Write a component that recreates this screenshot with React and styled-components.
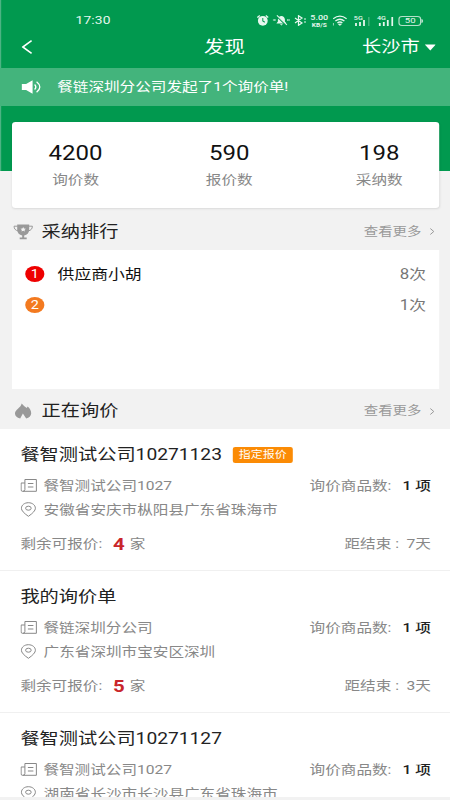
import React from "react";
import styled, { createGlobalStyle } from "styled-components";

const GlobalStyle = createGlobalStyle`
	html,
	body {
		margin: 0;
		width: 450px;
		height: 800px;
		overflow: hidden;
		background: #f2f2f2;
	}
	* {
		box-sizing: border-box;
	}
`;

/* 375px wide layout, widened to fill 450px */
const Page = styled.div`
	width: 375px;
	height: 800px;
	overflow: hidden;
	display: flex;
	flex-direction: column;
	transform: scaleX(1.2);
	transform-origin: 0 0;
	background: #f2f2f2;
	color: #222;
	font-family: Roboto, "Noto Sans CJK SC", sans-serif;
	font-size: 13px;
	line-height: 20px;
	white-space: nowrap;
`;

const Icon = styled.svg.attrs({ preserveAspectRatio: "none" })`
	display: block;
	flex: none;
	width: ${(props) => props.$w / 1.2}px;
	height: ${(props) => props.$h}px;
	margin-left: ${(props) => (props.$left || 0) / 1.2}px;
`;

const Top = styled.div`
	height: 171px;
	flex: none;
	background: #01994f;
	color: #fff;
	box-shadow: inset 1px 0 0 #4db383;
`;

const StatusBar = styled.div`
	height: 28px;
	padding: 13px 22px 0 63px;
	display: flex;
	justify-content: space-between;
	align-items: center;
	color: #e6f7ee;
`;

const Time = styled.div`
	font-size: 11.5px;
	line-height: 15px;
	letter-spacing: 0.1px;
`;

const StatusIcons = styled.div`
	display: flex;
	align-items: center;
`;

const Speed = styled.div`
	width: 16px;
	margin-left: 2px;
	display: flex;
	flex-direction: column;
	align-items: center;
	font-size: 7.5px;
	line-height: 8px;
	font-weight: 500;
	small {
		font-size: 5.5px;
		line-height: 6px;
		font-weight: 700;
	}
`;

const Signal = styled.div`
	position: relative;
	margin-left: ${(props) => props.$left}px;
	span {
		position: absolute;
		left: 0;
		top: -1px;
		font-size: 6px;
		line-height: 6px;
		font-weight: 500;
	}
`;

const Battery = styled.div`
	width: 19px;
	height: 10px;
	margin-left: 4px;
	border: 1px solid #b5e0ca;
	border-radius: 3px;
	font-size: 8px;
	line-height: 8.5px;
	text-align: center;
`;

const TitleBar = styled.div`
	height: 40px;
	padding: 0 12px 2px 18px;
	display: grid;
	grid-template-columns: 152px auto 1fr;
	align-items: center;
`;

const Title = styled.div`
	font-size: 17px;
	line-height: 24px;
`;

const City = styled.div`
	display: flex;
	align-items: center;
	justify-content: flex-end;
	font-size: 16px;
`;

const Notice = styled.div`
	height: 38px;
	padding-left: 18px;
	display: flex;
	align-items: center;
	gap: 13px;
	background: #43b47c;
`;

const Stats = styled.div`
	height: 86px;
	flex: none;
	margin: -49px 9px 0 10px;
	padding: 19px 0 0;
	position: relative;
	display: grid;
	grid-template-columns: 106px 150px 100px;
	background: #fff;
	border-radius: 3px;
	box-shadow: 0 1px 2px rgba(0, 0, 0, 0.1);
	text-align: center;
`;

const StatValue = styled.div`
	font-size: 20px;
	line-height: 25px;
	color: #111;
`;

const StatLabel = styled.div`
	margin-top: 4px;
	color: #888;
`;

const SectionHead = styled.div`
	height: ${(props) => props.$h}px;
	flex: none;
	padding: ${(props) => props.$top}px 13px 0 11px;
	display: flex;
	align-items: center;
`;

const SectionTitle = styled.div`
	flex: 1;
	margin-left: 7px;
	font-size: 16px;
`;

const More = styled.div`
	display: flex;
	align-items: center;
	font-size: 12px;
	color: #999;
`;

const Ranking = styled.div`
	height: 139px;
	flex: none;
	margin: 0 9px 0 10px;
	padding: 8px 11px;
	background: #fff;
`;

const RankRow = styled.div`
	height: 31px;
	display: flex;
	align-items: center;
	font-size: 14px;
	color: #777;
`;

const Badge = styled.div`
	width: 16px;
	height: 16px;
	border-radius: 50%;
	background: ${(props) => props.$color};
	color: #fff;
	font-size: 12px;
	line-height: 16px;
	text-align: center;
`;

const RankName = styled.div`
	flex: 1;
	margin-left: 11px;
	color: #111;
`;

const Inquiries = styled.div`
	height: 368px;
	flex: none;
	overflow: hidden;
	background: #fff;
`;

const Inquiry = styled.div`
	height: 142px;
	padding: 13px 16px 0 17px;
	border-bottom: 1px solid #f0f0f0;
	color: #888;
`;

const InquiryTitle = styled.div`
	height: 24px;
	padding-top: 1px;
	display: flex;
	align-items: center;
	font-size: 16px;
	color: #222;
`;

const Tag = styled.div`
	width: 50px;
	height: 16px;
	margin-left: 9px;
	border-radius: 2px;
	background: #fb8b05;
	color: #fff;
	font-size: 10px;
	line-height: 16px;
	text-align: center;
`;

const Line = styled.div`
	height: 24px;
	margin-top: ${(props) => props.$top || 0}px;
	display: flex;
	align-items: center;
`;

const LineText = styled.div`
	flex: 1;
	padding-top: 2px;
	margin-left: ${(props) => props.$left || 0}px;
`;

const LineEnd = styled.div`
	padding-top: ${(props) => props.$top || 0}px;
`;

const Count = styled.span`
	color: #222;
	font-weight: 500;
	margin-left: 6px;
`;

const Remaining = styled.div`
	flex: 1;
	display: flex;
	align-items: center;
	b {
		width: 10px;
		margin: 0 4px 0 9px;
		font-size: 17px;
		color: #c9252b;
	}
`;

const Days = styled.span`
	margin-left: 3px;
`;

const ranking = [
	{ name: "供应商小胡", times: 8, color: "#ee0000" },
	{ name: "", times: 1, color: "#f37a20" },
];

const inquiries = [
	{
		title: "餐智测试公司10271123",
		tag: "指定报价",
		company: "餐智测试公司1027",
		address: "安徽省安庆市枞阳县广东省珠海市",
		remain: 4,
		days: 7,
	},
	{
		title: "我的询价单",
		company: "餐链深圳分公司",
		address: "广东省深圳市宝安区深圳",
		remain: 5,
		days: 3,
	},
	{
		title: "餐智测试公司10271127",
		company: "餐智测试公司1027",
		address: "湖南省长沙市长沙县广东省珠海市",
	},
];

function MoreLink() {
	return (
		<More>
			查看更多
			<Icon $w={5} $h={7} $left={8} viewBox="0 0 5 7" fill="none" stroke="#999">
				<path d="M.7.5 4.2 3.5.7 6.5" />
			</Icon>
		</More>
	);
}

function StatusBarIcons() {
	return (
		<StatusIcons>
			<Icon $w={12} $h={11} viewBox="0 0 12 11" fill="currentColor">
				<circle cx="6" cy="5.8" r="4.9" />
				<path d="M.5 2.5 3 .5M11.5 2.5 9 .5" stroke="currentColor" strokeWidth="1.3" />
				<path d="M6 3v3l2 1.2" fill="none" stroke="#01994f" />
			</Icon>
			<Icon $w={18} $h={11} $left={4} viewBox="0 0 18 11" fill="currentColor">
				<path d="M4 8.500 5.500 6.500V4.500Q6 1 9 1t3.500 3.500v2l1.500 2zM7.500 9.200h3L9 10.500z" />
				<path d="M4.200 1 14 10.500" stroke="#01994f" strokeWidth="1.500" />
				<path d="M4.500.3 14.500 9.800" stroke="currentColor" />
				<path d="M.5 5h1M2.500 4v2M16.500 5h1M15.500 4v2" stroke="currentColor" />
			</Icon>
			<Icon $w={13} $h={11} $left={4} viewBox="0 0 13 11" fill="none" stroke="currentColor" strokeWidth="1.2">
				<path d="M1 3 8 8 4.500 10.300V.7L8 3 1 8M10 4h2M10 7h2" />
			</Icon>
			<Speed>
				5.00<small>KB/S</small>
			</Speed>
			<Icon $w={15} $h={11} $left={4} viewBox="0 0 15 11" fill="none" stroke="currentColor" strokeWidth="1.3">
				<path d="M.8 3.800Q7.500-1.500 14.200 3.800M3 6Q7.500 2.500 12 6M5 8Q7.500 6 10 8" />
				<path d="M6 9h3L7.500 10.500zM1 8v2.500" fill="currentColor" strokeWidth=".7" />
			</Icon>
			<Signal $left={5}>
				<span>5G</span>
				<Icon $w={16} $h={10} viewBox="0 0 16 10" stroke="currentColor" strokeWidth="1.8">
					<path d="M2 7V10M6 6V10M10 4V10" />
					<path d="M15 1V10" opacity=".3" />
				</Icon>
			</Signal>
			<Signal $left={6}>
				<span>4G</span>
				<Icon $w={17} $h={10} viewBox="0 0 17 10" stroke="currentColor" strokeWidth="1.8">
					<path d="M3 7V10M7 6V10M11 4V10M15.500 1V10" />
				</Icon>
			</Signal>
			<Battery>50</Battery>
			<Icon $w={2} $h={4} viewBox="0 0 2 4" fill="#b5e0ca">
				<path d="M0 0Q2 0 2 2T0 4z" />
			</Icon>
		</StatusIcons>
	);
}

function InquiryItem({ item }) {
	return (
		<Inquiry>
			<InquiryTitle>
				{item.title}
				{item.tag && <Tag>{item.tag}</Tag>}
			</InquiryTitle>
			<Line $top={7}>
				<Icon $w={17} $h={13} viewBox="0 0 17 13" fill="none" stroke="#888">
					<path d="M4.500.5H16V12.300H2Q.7 12.300 .7 11V4H4.500M4.500.5V10.500Q4.500 12.300 2.500 12.300M7.500 4.500H13M7.500 8H13" />
				</Icon>
				<LineText $left={5}>{item.company}</LineText>
				<LineEnd $top={1}>
					询价商品数: <Count>1 项</Count>
				</LineEnd>
			</Line>
			<Line>
				<Icon $w={16} $h={15} viewBox="0 0 16 15" fill="none" stroke="#888">
					<path d="M8 14.300Q1 9.500 1 6.300C1 3.200 4 .7 8 .7S15 3.200 15 6.300Q15 9.500 8 14.300z" />
					<ellipse cx="8" cy="6.2" rx="2.8" ry="2" />
				</Icon>
				<LineText $left={6}>{item.address}</LineText>
			</Line>
			{item.remain && (
				<Line $top={11}>
					<Remaining>
						剩余可报价: <b>{item.remain}</b> 家
					</Remaining>
					<LineEnd>
						距结束 : <Days>{item.days}天</Days>
					</LineEnd>
				</Line>
			)}
		</Inquiry>
	);
}

function App() {
	return (
		<>
			<GlobalStyle />
			<Page>
				<Top>
					<StatusBar>
						<Time>17:30</Time>
						<StatusBarIcons />
					</StatusBar>
					<TitleBar>
						<Icon $w={11} $h={14} viewBox="0 0 11 14" fill="none" stroke="#fff" strokeWidth="1.6">
							<path d="M10 .7 1.200 7 10 13.300" />
						</Icon>
						<Title>发现</Title>
						<City>
							长沙市
							<Icon $w={11} $h={7} $left={5} viewBox="0 0 11 7" fill="#fff">
								<path d="M0 .5H11L5.500 6.500z" />
							</Icon>
						</City>
					</TitleBar>
					<Notice>
						<Icon $w={20} $h={14} viewBox="0 0 20 14" fill="#fff">
							<path d="M0 4H4.500L11 .3V13.700L4.500 10H0z" />
							<path d="M13 4.500Q15.500 7 13 9.500M15 1.800Q21.500 7 15 12.200" fill="none" stroke="#fff" strokeWidth="1.3" />
						</Icon>
						餐链深圳分公司发起了1个询价单!
					</Notice>
				</Top>
				<Stats>
					<div>
						<StatValue>4200</StatValue>
						<StatLabel>询价数</StatLabel>
					</div>
					<div>
						<StatValue>590</StatValue>
						<StatLabel>报价数</StatLabel>
					</div>
					<div>
						<StatValue>198</StatValue>
						<StatLabel>采纳数</StatLabel>
					</div>
				</Stats>
				<SectionHead $h={42} $top={5}>
					<Icon $w={20} $h={16} viewBox="0 0 20 16" fill="#999">
						<path d="M4 .5H16V6Q15.500 10.500 11 11.500V13.500H13.500V15.300H6.500V13.500H9V11.500Q4.500 10.500 4 6z" />
						<path d="M4.500 2.200H.8Q.8 6 5 7M15.500 2.200H19.200Q19.200 6 15 7" fill="none" stroke="#999" />
						<path d="m10 3 .8 1.600 1.900.1-1.400 1.200.5 1.700L10 6.700 8.200 7.600l.5-1.700L7.300 4.700l1.900-.1z" fill="#f2f2f2" />
					</Icon>
					<SectionTitle>采纳排行</SectionTitle>
					<MoreLink />
				</SectionHead>
				<Ranking>
					{ranking.map((item, index) => (
						<RankRow key={index}>
							<Badge $color={item.color}>{index + 1}</Badge>
							<RankName>{item.name}</RankName>
							{item.times}次
						</RankRow>
					))}
				</Ranking>
				<SectionHead $h={40} $top={4}>
					<Icon $w={20} $h={16} viewBox="0 0 20 16" fill="#999">
						<path d="M8.500.5Q10.500 3 13.500 5L14.500 3.500Q18 6.500 18 10.500 17.500 14.500 13 15.500L9.700 10.500 7 15.500Q1.800 14 1.800 10.500C1.800 6.500 7.500 5 8.500.5z" />
					</Icon>
					<SectionTitle>正在询价</SectionTitle>
					<MoreLink />
				</SectionHead>
				<Inquiries>
					{inquiries.map((item, index) => (
						<InquiryItem key={index} item={item} />
					))}
				</Inquiries>
			</Page>
		</>
	);
}

export default App;
